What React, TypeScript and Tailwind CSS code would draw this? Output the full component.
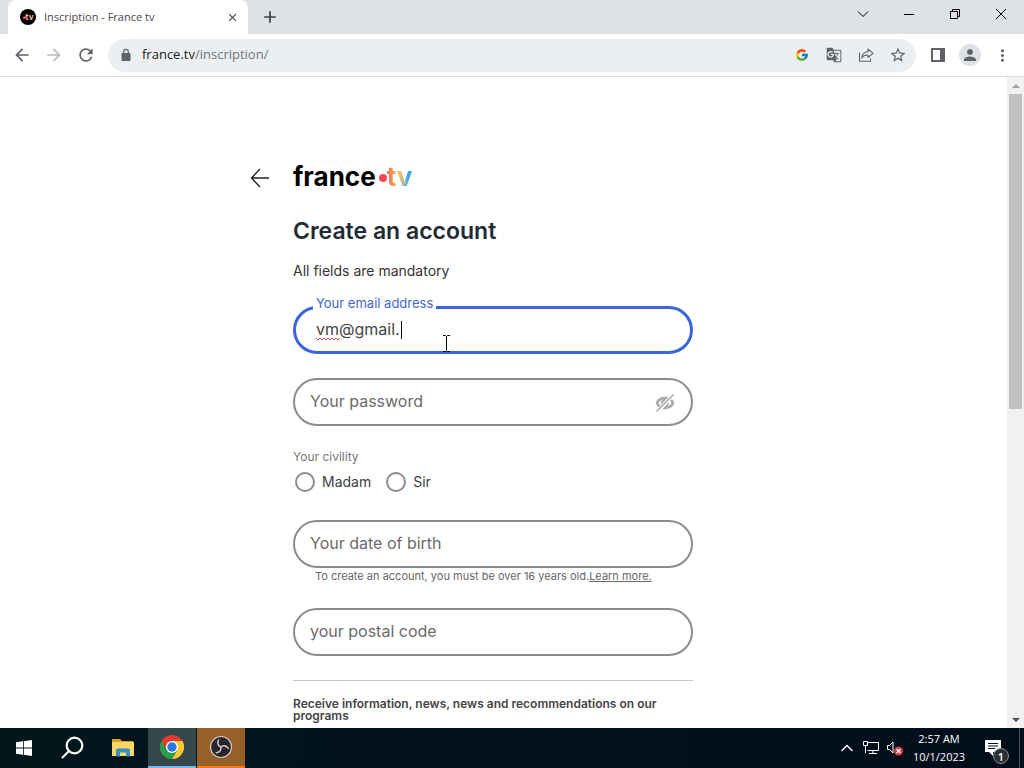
import React from "react";
import {
  MdAdd,
  MdArrowBack,
  MdArrowForward,
  MdClose,
  MdGTranslate,
  MdMoreVert,
  MdPerson,
  MdRefresh,
  MdStarBorder,
} from "react-icons/md";
import { FcGoogle } from "react-icons/fc";

function WindowButton({ label, children }: { label: string; children: React.ReactNode }) {
  return (
    <button type="button" aria-label={label} className="flex h-7 w-[46px] items-center justify-center text-black">
      <svg width="12" height="12" viewBox="0 0 12 12" fill="none" stroke="currentColor" strokeWidth="1">
        {children}
      </svg>
    </button>
  );
}

function ToolButton({ label, children }: { label: string; children: React.ReactNode }) {
  return (
    <button type="button" aria-label={label} className="flex h-8 w-8 shrink-0 items-center justify-center text-[#5f6368]">
      {children}
    </button>
  );
}

function TabStrip() {
  return (
    <div className="flex h-[34px] shrink-0 items-start bg-[#dee1e6] pl-2">
      <div className="flex h-[34px] w-60 items-center rounded-t-lg bg-white pl-3 pr-2">
        <span className="flex h-4 w-4 shrink-0 items-center justify-center rounded-full bg-black">
          <span className="h-[3px] w-[3px] rounded-full bg-[#ff4a4a]" />
          <span className="font-['Inter',sans-serif] text-[8px] font-bold leading-none text-[#f5b5a0]">tv</span>
        </span>
        <span className="ml-2 flex-1 whitespace-nowrap text-[11px] text-[#45484c]">Inscription - France tv</span>
        <button type="button" aria-label="Close tab" className="flex h-4 w-4 items-center justify-center text-[#3c4043]">
          <MdClose size={13} />
        </button>
      </div>
      <button type="button" aria-label="New tab" className="ml-2 flex h-[34px] w-7 items-center justify-center text-[#3c4043]">
        <MdAdd size={20} />
      </button>
      <div className="ml-auto flex">
        <WindowButton label="Search tabs">
          <path d="M1 3.5 6 8.5 11 3.5" />
        </WindowButton>
        <WindowButton label="Minimize">
          <path d="M1 6.5H11" />
        </WindowButton>
        <WindowButton label="Restore">
          <path d="M1.5 3.5H8.5V10.5H1.5ZM3.5 3.5V1.5H10.5V8.5H8.5" />
        </WindowButton>
        <WindowButton label="Close">
          <path d="M1 1 11 11M11 1 1 11" />
        </WindowButton>
      </div>
    </div>
  );
}

function Toolbar() {
  return (
    <div className="flex h-[43px] shrink-0 items-center border-b border-[#dadce0] bg-white px-1.5">
      <ToolButton label="Back">
        <MdArrowBack size={20} />
      </ToolButton>
      <ToolButton label="Forward">
        <MdArrowForward size={20} className="text-[#babcbe]" />
      </ToolButton>
      <ToolButton label="Reload">
        <MdRefresh size={20} />
      </ToolButton>
      <div className="mx-1.5 flex h-[33px] min-w-0 flex-1 items-center rounded-full bg-[#eceff1] pl-3 pr-0.5">
        <svg width="12" height="14" viewBox="0 0 12 14" className="shrink-0 text-[#5f6368]" aria-hidden="true">
          <rect x="1.5" y="5" width="9" height="8" rx="1" fill="currentColor" />
          <path d="M3.7 5.5V3.6a2.3 2.3 0 0 1 4.6 0V5.5" fill="none" stroke="currentColor" strokeWidth="1.3" />
        </svg>
        <div className="ml-2.5 flex-1 text-[13px] text-[#72767a]">
          <span className="text-[#202124]">france.tv</span>/inscription/
        </div>
        <ToolButton label="Google search">
          <FcGoogle size={14} />
        </ToolButton>
        <ToolButton label="Translate this page">
          <MdGTranslate size={16} />
        </ToolButton>
        <ToolButton label="Share">
          <svg width="16" height="16" viewBox="0 0 16 16" fill="none" stroke="currentColor" strokeWidth="1.1">
            <path d="M1.5 5.5V14.3H12.5V11.5" />
            <path d="M10 2 15 6.3 10 10.5V8C7 8 5 9 3.7 11 4.2 7.5 6.3 5 10 4.5Z" strokeLinejoin="round" />
          </svg>
        </ToolButton>
        <ToolButton label="Bookmark">
          <MdStarBorder size={18} />
        </ToolButton>
      </div>
      <ToolButton label="Side panel">
        <svg width="14" height="14" viewBox="0 0 14 14">
          <path fillRule="evenodd" fill="currentColor" d="M0 0H14V14H0ZM2 2V12H9V2Z" />
        </svg>
      </ToolButton>
      <ToolButton label="Profile">
        <span className="flex h-[22px] w-[22px] items-center justify-center rounded-full bg-[#dee1e6]">
          <MdPerson size={18} />
        </span>
      </ToolButton>
      <ToolButton label="Menu">
        <MdMoreVert size={19} />
      </ToolButton>
    </div>
  );
}

function Field({ id, label, type = "text", children }: { id: string; label: string; type?: string; children?: React.ReactNode }) {
  return (
    <div className="flex h-12 items-center rounded-full border-2 border-[#8c8c8c] pb-0.5 pl-[15px] pr-4">
      <input
        id={id}
        type={type}
        aria-label={label}
        placeholder={label}
        className="min-w-0 flex-1 bg-transparent text-base text-[#333] outline-none placeholder:text-[#6b6b6b]"
      />
      {children}
    </div>
  );
}

function EmailField() {
  return (
    <div className="relative mt-6 flex h-12 items-center rounded-full border-[3px] border-[#3b66d9] pb-0.5 pl-5 pr-4">
      <label
        htmlFor="email"
        className="absolute -top-3.5 left-[17px] bg-white px-[3px] text-[13px] leading-4 text-[#4468cf]"
      >
        Your email address
      </label>
      <input
        id="email"
        type="text"
        defaultValue="vm@gmail."
        className="min-w-0 flex-1 bg-transparent text-base text-[#444] outline-none"
      />
      <svg className="absolute left-5 top-7" width="24" height="4" viewBox="0 0 24 4" fill="none" stroke="#e0474c" aria-hidden="true">
        <path d="M0 1 2 3 4 1 6 3 8 1 10 3 12 1 14 3 16 1 18 3 20 1 22 3 24 1" />
      </svg>
      <span className="absolute left-[105px] top-3 h-[18px] w-px bg-black" />
      <svg className="absolute left-[146px] top-[26px]" width="9" height="17" viewBox="0 0 9 17" fill="none" stroke="#000" aria-hidden="true">
        <path d="M1 .5H3.5L4.5 1.5 5.5.5H8M4.5 1.5V15.5M1 16.5H3.5L4.5 15.5 5.5 16.5H8" />
      </svg>
    </div>
  );
}

function HiddenEye() {
  return (
    <svg width="20" height="20" viewBox="0 0 20 20" fill="none" stroke="#ababab" aria-hidden="true">
      <path d="M2 10C4.5 3.5 15.5 3.5 18 10 15.5 16.5 4.5 16.5 2 10Z" strokeWidth="2.6" />
      <circle cx="10" cy="10" r="3" strokeWidth="2" />
      <path d="M2.5 18.5 18.5 1.5" stroke="#fff" strokeWidth="4" />
      <path d="M1.5 18.5 18.5 1.5" strokeWidth="1.6" />
    </svg>
  );
}

function Brand() {
  return (
    <div className="-ml-[43px] flex h-8 items-center">
      <a href="#back" aria-label="Go back" className="flex w-[43px] shrink-0 pt-0.5">
        <svg width="20" height="20" viewBox="0 0 20 20" fill="none" stroke="#222" strokeWidth="1.4">
          <path d="M10 1 1.5 10 10 19M1.5 10H19" />
        </svg>
      </a>
      <a href="#home" className="flex items-center text-[26px] font-bold leading-8 text-black">
        france
        <span className="ml-[3px] mt-0.5 h-2 w-2 rounded-full bg-[#f5484f]" />
        <span className="bg-linear-to-r from-[#f5805a] from-10% via-[#f5c451] via-50% to-[#35a9e6] to-85% bg-clip-text text-transparent">
          tv
        </span>
      </a>
    </div>
  );
}

function Civility({ label }: { label: string }) {
  return (
    <label className="flex items-center gap-[7px] text-sm leading-5 text-[#3d3d3d]">
      <input type="radio" name="civility" className="h-5 w-5 appearance-none rounded-full border-2 border-[#8c8c8c] bg-white" />
      {label}
    </label>
  );
}

function SignUp() {
  return (
    <main className="min-w-0 flex-1 overflow-hidden bg-white pr-[21px] font-['Inter',sans-serif]">
      <form className="mx-auto max-w-[400px] pt-[84px]">
        <Brand />
        <h1 className="mt-6 text-[23px] font-semibold leading-7 text-[#222b33]">Create an account</h1>
        <p className="mt-4 pb-px text-sm leading-5 text-[#333]">All fields are mandatory</p>
        <EmailField />
        <div className="mt-6">
          <Field id="password" label="Your password" type="password">
            <button type="button" aria-label="Show password" className="pt-1">
              <HiddenEye />
            </button>
          </Field>
        </div>
        <fieldset className="mt-6">
          <legend className="text-xs leading-[14px] text-[#757575]">Your civility</legend>
          <div className="mt-2 flex gap-[15px] pl-0.5">
            <Civility label="Madam" />
            <Civility label="Sir" />
          </div>
        </fieldset>
        <div className="mt-7">
          <Field id="birth" label="Your date of birth" />
        </div>
        <p className="h-10 whitespace-nowrap pl-[22px] text-[11px] leading-4 text-[#666]">
          To create an account, you must be over 16 years old.
          <a href="#age" className="underline">
            Learn more.
          </a>
        </p>
        <Field id="postal" label="your postal code" />
        <hr className="mt-6 border-[#c6c6c6]" />
        <p className="mt-[17px] text-xs font-semibold leading-3 text-[#454545]">
          Receive information, news, news and recommendations on our programs
        </p>
      </form>
    </main>
  );
}

function ScrollBar() {
  return (
    <div className="flex w-[17px] shrink-0 flex-col items-center bg-[#f1f1f1]">
      <div className="flex h-[17px] items-center justify-center">
        <svg width="8" height="4" viewBox="0 0 8 4">
          <path d="M4 0 8 4H0Z" fill="#a3a3a3" />
        </svg>
      </div>
      <div className="flex w-[13px] flex-1 flex-col">
        <div className="h-[51%] bg-[#c1c1c1]" />
      </div>
      <div className="flex h-[17px] items-center justify-center">
        <svg width="8" height="4" viewBox="0 0 8 4">
          <path d="M0 0H8L4 4Z" fill="#505050" />
        </svg>
      </div>
    </div>
  );
}

function TaskButton({ label, tone = "", children }: { label: string; tone?: string; children: React.ReactNode }) {
  return (
    <button type="button" aria-label={label} className={`flex h-10 w-12 shrink-0 items-center justify-center ${tone}`}>
      {children}
    </button>
  );
}

function Taskbar() {
  return (
    <footer className="flex h-10 shrink-0 items-center bg-linear-to-r from-[#02161c] to-[#020d1c] text-white">
      <TaskButton label="Start">
        <svg width="16" height="16" viewBox="0 0 16 16" fill="#fff">
          <path d="M0 2.3 7 1.3V7.6H0ZM7.8 1.2 16 0V7.6H7.8ZM0 8.4H7V14.7L0 13.7ZM7.8 8.4H16V16L7.8 14.8Z" />
        </svg>
      </TaskButton>
      <TaskButton label="Search">
        <svg width="24" height="24" viewBox="0 0 24 24" fill="none" stroke="#fff" strokeWidth="2.2">
          <circle cx="14.5" cy="9.5" r="7.8" />
          <path d="M9 15 2 22" />
        </svg>
      </TaskButton>
      <div className="ml-[3px] flex gap-px">
        <TaskButton label="File Explorer">
          <svg width="22" height="20" viewBox="0 0 22 20">
            <path d="M0 1H8L10 3H21V6H0Z" fill="#dca31e" />
            <path d="M0 4H22V18H0Z" fill="#fbd765" />
            <path d="M4 18.5V12.5Q4 10.5 6 10.5H16Q18 10.5 18 12.5V18.5H14V14.5H8V18.5Z" fill="#3a8fc4" />
          </svg>
        </TaskButton>
        <TaskButton label="Google Chrome" tone="border-b-2 border-[#76b9ed] bg-[#33474c]">
          <svg width="24" height="24" viewBox="0 0 24 24">
            <circle cx="12" cy="12" r="12" fill="#e33b2e" />
            <path d="M12 6H22.4A12 12 0 0 1 12 24L17.2 15Z" fill="#fcc934" />
            <path d="M17.2 15 12 24A12 12 0 0 1 1.6 6L6.8 15Z" fill="#269e4b" />
            <circle cx="12" cy="12" r="6" fill="#fff" />
            <circle cx="12" cy="12" r="4.7" fill="#2e77e6" />
          </svg>
        </TaskButton>
        <TaskButton label="OBS Studio" tone="border-b-2 border-[#f77b0b] bg-[#96602b]">
          <svg width="24" height="24" viewBox="0 0 24 24" fill="none">
            <circle cx="12" cy="12" r="10.5" fill="#28252b" stroke="#d0c9c4" strokeWidth="1.2" />
            <g stroke="#c9c4c6" strokeWidth="1.6" strokeLinecap="round">
              <path d="M12 12C9 11 8 8 9.5 5" />
              <path d="M12 12C14.5 10 17.5 10.5 19.2 13.3" />
              <path d="M12 12C12.5 15 10.5 17.5 7.3 17.7" />
            </g>
          </svg>
        </TaskButton>
      </div>
      <div className="ml-auto flex items-center">
        <button type="button" aria-label="Show hidden icons" className="flex w-6 justify-center">
          <svg width="12" height="8" viewBox="0 0 12 8" fill="none" stroke="#fff" strokeWidth="1.4">
            <path d="M.5 7 6 1.5 11.5 7" />
          </svg>
        </button>
        <button type="button" aria-label="Network" className="flex w-6 justify-center">
          <svg width="16" height="16" viewBox="0 0 16 16" fill="none" stroke="#fff">
            <path d="M4.5 2.5H15.5V10.5H4.5M10 10.5V13.5M6 13.5H14M.5 1.5H4.5V5.5H.5ZM2.5 5.5V13" />
          </svg>
        </button>
        <button type="button" aria-label="Volume muted" className="flex w-6 justify-center">
          <svg width="16" height="16" viewBox="0 0 16 16" fill="none">
            <path d="M.5 5.5H2.5L6 2V13L2.5 9.5H.5Z" stroke="#fff" />
            <circle cx="11.5" cy="11" r="4.5" fill="#d83b40" />
            <path d="M9.5 9 13.5 13M13.5 9 9.5 13" stroke="#fff" strokeWidth="1.2" />
          </svg>
        </button>
        <div className="flex w-16 flex-col items-center whitespace-nowrap text-[11px] leading-[18px]">
          <span>2:57 AM</span>
          <span>10/1/2023</span>
        </div>
        <button type="button" aria-label="Notifications" className="mr-1 flex h-10 w-11 items-center justify-center">
          <span className="relative">
            <svg width="16" height="16" viewBox="0 0 16 16" fill="#fff">
              <path fillRule="evenodd" d="M0 0H16V12H8V16L4 12H0ZM3 3V4H13V3ZM3 5.5V6.5H13V5.5ZM3 8V9H10V8Z" />
            </svg>
            <span className="absolute -bottom-2 -right-2 flex h-4 w-4 items-center justify-center rounded-full border border-[#85898d] bg-[#2b3036] text-[11px] font-semibold leading-none">
              1
            </span>
          </span>
        </button>
        <span className="h-10 w-[5px] border-l border-[#4a525c]" />
      </div>
    </footer>
  );
}

export default function App() {
  return (
    <div className="flex h-screen flex-col overflow-hidden bg-white font-['Open_Sans','Noto_Sans',sans-serif]">
      <TabStrip />
      <Toolbar />
      <div className="flex min-h-0 flex-1">
        <SignUp />
        <ScrollBar />
      </div>
      <Taskbar />
    </div>
  );
}
